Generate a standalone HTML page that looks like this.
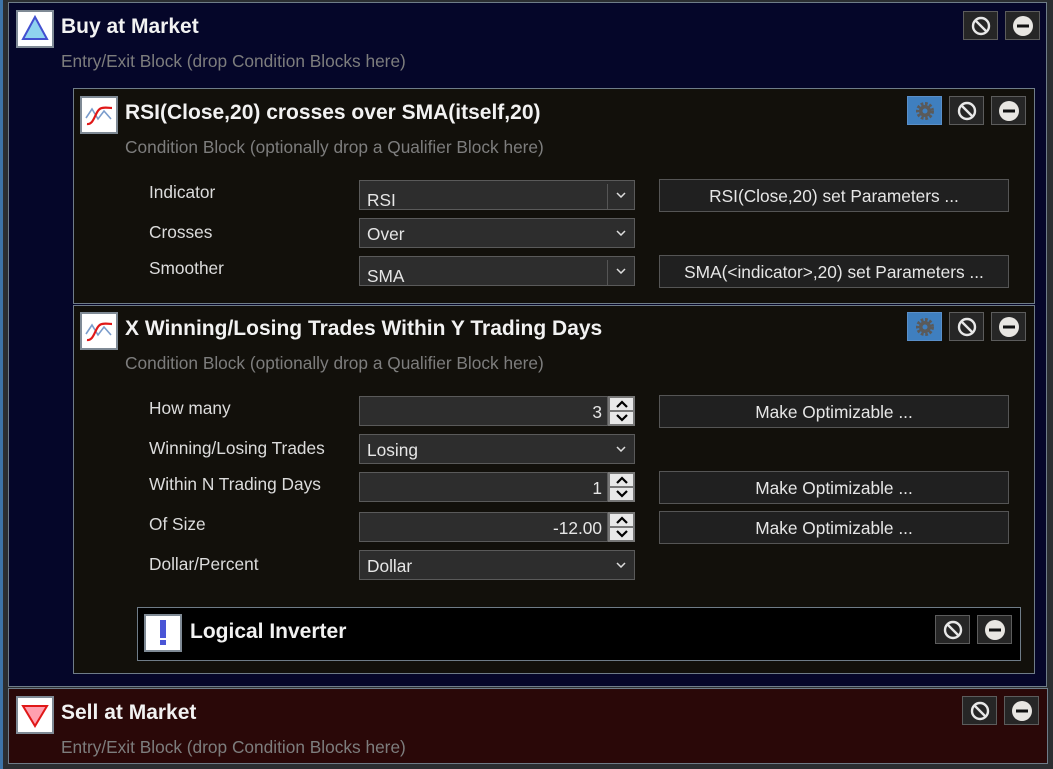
<!DOCTYPE html>
<html><head><meta charset="utf-8"><style>
*{box-sizing:border-box;margin:0;padding:0}
body{width:1053px;height:769px;background:#2b2e31;position:relative;overflow:hidden;font-family:"Liberation Sans",sans-serif;color:#eee}
.a{position:absolute}
.blk{position:absolute;border:1px solid #6f7c88}
.ib{position:absolute;width:38px;height:38px;background:#fff;border:2px solid #7f8a95}
.t{position:absolute;font-weight:bold;font-size:21px;color:#f2f2f2;white-space:nowrap}
.s{position:absolute;font-size:17.3px;color:#7d7d7d;white-space:nowrap}
.l{position:absolute;font-size:17.3px;color:#dcdcdc;white-space:nowrap}
.btn{position:absolute;width:35px;height:29px;background:#262626;border:1px solid #5c5c5c}
.dd{position:absolute;left:359px;width:276px;height:30px;background:#2d2d2d;border:1px solid #5a5a5a;font-size:17.3px;color:#e6e6e6;padding:5px 0 0 7px}
.dd .sep{position:absolute;right:26px;top:3px;bottom:0;border-left:1px solid #555}
.dd svg{position:absolute;right:8px;top:11px}
.pb{position:absolute;left:659px;width:350px;height:33px;background:#202020;border:1px solid #555;font-size:17.3px;color:#e6e6e6;text-align:center;line-height:33px}
.num{position:absolute;left:359px;width:249px;height:30px;background:#2d2d2d;border:1px solid #5a5a5a;font-size:17.3px;color:#e6e6e6;text-align:right;padding:5px 5px 0 0}
.sp{position:absolute;left:608px;width:27px;height:30px;background:#777}
.sp div{position:absolute;left:2px;width:23px;height:12px;background:#e8e8e8}
</style></head><body>
<div class="a" style="left:0;top:0;width:3px;height:769px;background:#3e74a8"></div>

<!-- Buy block -->
<div class="blk" style="left:8px;top:2px;width:1039px;height:685px;background:#050629"></div>
<div class="ib" style="left:16px;top:10px"><svg width="34" height="34"><polygon points="17,5 29,27 5,27" fill="#8fd3ef" stroke="#4250d0" stroke-width="2"/></svg></div>
<div class="t" style="left:61px;top:15px">Buy at Market</div>
<div class="s" style="left:61px;top:51px">Entry/Exit Block (drop Condition Blocks here)</div>

<!-- Cond 1 -->
<div class="blk" style="left:73px;top:88px;width:962px;height:216px;background:#12100b"></div>
<div class="ib" style="left:80px;top:96px"><svg width="34" height="34"><path d="M4 20 L10 11 L16 21 L22 13 L29 21" fill="none" stroke="#7a9ccc" stroke-width="1.6"/><path d="M5 26 C13 27 13 11 20 10 C24 9 27 10 30 10" fill="none" stroke="#e01818" stroke-width="2.2"/></svg></div>
<div class="t" style="left:125px;top:101px">RSI(Close,20) crosses over SMA(itself,20)</div>
<div class="s" style="left:125px;top:137px">Condition Block (optionally drop a Qualifier Block here)</div>

<div class="l" style="left:149px;top:182px">Indicator</div>
<div class="l" style="left:149px;top:222px">Crosses</div>
<div class="l" style="left:149px;top:258px">Smoother</div>
<div class="dd" style="top:180px;padding-top:9px">RSI<span class="sep"></span><svg width="10" height="6"><path d="M1 1 L5 5 L9 1" fill="none" stroke="#ddd" stroke-width="1.5"/></svg></div>
<div class="dd" style="top:218px">Over<svg width="10" height="6"><path d="M1 1 L5 5 L9 1" fill="none" stroke="#ddd" stroke-width="1.5"/></svg></div>
<div class="dd" style="top:256px;padding-top:9px">SMA<span class="sep"></span><svg width="10" height="6"><path d="M1 1 L5 5 L9 1" fill="none" stroke="#ddd" stroke-width="1.5"/></svg></div>
<div class="pb" style="top:179px">RSI(Close,20) set Parameters ...</div>
<div class="pb" style="top:255px">SMA(&lt;indicator&gt;,20) set Parameters ...</div>

<!-- Cond 2 -->
<div class="blk" style="left:73px;top:305px;width:962px;height:369px;background:#12100b"></div>
<div class="ib" style="left:80px;top:312px"><svg width="34" height="34"><path d="M4 20 L10 11 L16 21 L22 13 L29 21" fill="none" stroke="#7a9ccc" stroke-width="1.6"/><path d="M5 26 C13 27 13 11 20 10 C24 9 27 10 30 10" fill="none" stroke="#e01818" stroke-width="2.2"/></svg></div>
<div class="t" style="left:125px;top:317px">X Winning/Losing Trades Within Y Trading Days</div>
<div class="s" style="left:125px;top:353px">Condition Block (optionally drop a Qualifier Block here)</div>

<div class="l" style="left:149px;top:398px">How many</div>
<div class="l" style="left:149px;top:438px">Winning/Losing Trades</div>
<div class="l" style="left:149px;top:474px">Within N Trading Days</div>
<div class="l" style="left:149px;top:514px">Of Size</div>
<div class="l" style="left:149px;top:554px">Dollar/Percent</div>

<div class="num" style="top:396px">3</div>
<div class="sp" style="top:396px"><div style="top:2px"></div><div style="top:16px"></div><svg class="a" style="left:7px;top:3px" width="14" height="24"><path d="M2 8 L7 3 L12 8M2 16 L7 21 L12 16" fill="none" stroke="#000" stroke-width="2.2"/></svg></div>
<div class="dd" style="top:434px">Losing<svg width="10" height="6"><path d="M1 1 L5 5 L9 1" fill="none" stroke="#ddd" stroke-width="1.5"/></svg></div>
<div class="num" style="top:472px">1</div>
<div class="sp" style="top:472px"><div style="top:2px"></div><div style="top:16px"></div><svg class="a" style="left:7px;top:3px" width="14" height="24"><path d="M2 8 L7 3 L12 8M2 16 L7 21 L12 16" fill="none" stroke="#000" stroke-width="2.2"/></svg></div>
<div class="num" style="top:512px">-12.00</div>
<div class="sp" style="top:512px"><div style="top:2px"></div><div style="top:16px"></div><svg class="a" style="left:7px;top:3px" width="14" height="24"><path d="M2 8 L7 3 L12 8M2 16 L7 21 L12 16" fill="none" stroke="#000" stroke-width="2.2"/></svg></div>
<div class="dd" style="top:550px">Dollar<svg width="10" height="6"><path d="M1 1 L5 5 L9 1" fill="none" stroke="#ddd" stroke-width="1.5"/></svg></div>
<div class="pb" style="top:395px">Make Optimizable ...</div>
<div class="pb" style="top:471px">Make Optimizable ...</div>
<div class="pb" style="top:511px">Make Optimizable ...</div>

<!-- Inverter -->
<div class="blk" style="left:137px;top:607px;width:884px;height:54px;background:#000"></div>
<div class="ib" style="left:144px;top:614px"><svg width="34" height="34"><rect x="14" y="4" width="6" height="18" fill="#4a55d6"/><rect x="14" y="24" width="6" height="5" fill="#4a55d6"/></svg></div>
<div class="t" style="left:190px;top:620px">Logical Inverter</div>

<!-- Sell block -->
<div class="blk" style="left:8px;top:688px;width:1040px;height:76px;background:#2a0808"></div>
<div class="ib" style="left:16px;top:696px"><svg width="34" height="34"><polygon points="5,8 29,8 17,28" fill="#ffa0b0" stroke="#e01818" stroke-width="2"/></svg></div>
<div class="t" style="left:61px;top:701px">Sell at Market</div>
<div class="s" style="left:61px;top:737px">Entry/Exit Block (drop Condition Blocks here)</div>

<!-- buttons -->
<svg width="0" height="0" style="position:absolute"><defs>
<g id="no"><circle cx="17" cy="14" r="8" fill="none" stroke="#e8e8e8" stroke-width="2.4"/><path d="M11.5 8.5 L22.5 19.5" stroke="#e8e8e8" stroke-width="2.4"/></g>
<g id="mi"><circle cx="17" cy="14" r="10" fill="#e8e6e2"/><rect x="11" y="12.5" width="12" height="3" fill="#111"/></g>
<g id="gear"><circle cx="17" cy="14" r="7" fill="none" stroke="#5a5a5a" stroke-width="4" stroke-dasharray="2.5 1.6"/><circle cx="17" cy="14" r="6" fill="#5a5a5a"/><circle cx="17" cy="14" r="2.5" fill="#3f7fbf"/></g>
</defs></svg>
<div class="btn" style="left:963px;top:11px"><svg width="34" height="28"><use href="#no"/></svg></div>
<div class="btn" style="left:1005px;top:11px"><svg width="34" height="28"><use href="#mi"/></svg></div>

<div class="btn" style="left:907px;top:96px;background:#3f7fbf;border-color:#5a8fc8"><svg width="34" height="28"><use href="#gear"/></svg></div>
<div class="btn" style="left:949px;top:96px"><svg width="34" height="28"><use href="#no"/></svg></div>
<div class="btn" style="left:991px;top:96px"><svg width="34" height="28"><use href="#mi"/></svg></div>

<div class="btn" style="left:907px;top:312px;background:#3f7fbf;border-color:#5a8fc8"><svg width="34" height="28"><use href="#gear"/></svg></div>
<div class="btn" style="left:949px;top:312px"><svg width="34" height="28"><use href="#no"/></svg></div>
<div class="btn" style="left:991px;top:312px"><svg width="34" height="28"><use href="#mi"/></svg></div>

<div class="btn" style="left:935px;top:615px"><svg width="34" height="28"><use href="#no"/></svg></div>
<div class="btn" style="left:977px;top:615px"><svg width="34" height="28"><use href="#mi"/></svg></div>

<div class="btn" style="left:962px;top:696px"><svg width="34" height="28"><use href="#no"/></svg></div>
<div class="btn" style="left:1004px;top:696px"><svg width="34" height="28"><use href="#mi"/></svg></div>
</body></html>
